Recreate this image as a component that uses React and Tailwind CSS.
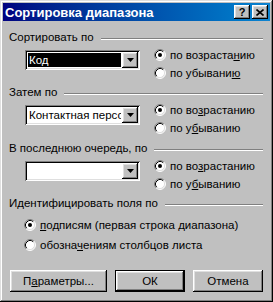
import React from "react";

const raised =
  "shadow-[inset_-1px_-1px_#000,inset_1px_1px_#fff,inset_-2px_-2px_#808080,inset_2px_2px_#dfdfdf]";

function Radio({ checked }) {
  return (
    <svg width="12" height="12" viewBox="0 0 12 12" className="shrink-0">
      <circle cx="6" cy="6" r="5" fill="#fff" />
      <path d="M2.11 9.89A5.5 5.5 0 0 1 9.89 2.11" stroke="#808080" fill="none" />
      <path d="M9.89 2.11A5.5 5.5 0 0 1 2.11 9.89" stroke="#fff" fill="none" />
      <path d="M2.82 9.18A4.5 4.5 0 0 1 9.18 2.82" stroke="#000" fill="none" />
      <path d="M9.18 2.82A4.5 4.5 0 0 1 2.82 9.18" stroke="#dfdfdf" fill="none" />
      {checked && <circle cx="6" cy="6" r="2" fill="#000" />}
    </svg>
  );
}

function Option({ checked, children, h = "h-[18px]" }) {
  return (
    <div className={`flex items-center ${h}`}>
      <Radio checked={checked} />
      <span className="ml-[4px] whitespace-nowrap">{children}</span>
    </div>
  );
}

function Header({ children, className = "" }) {
  return (
    <div className={`flex items-center h-[13px] ${className}`}>
      <span className="whitespace-nowrap">{children}</span>
      <div className="flex-1 ml-[7px] mt-[3px] border-t border-t-[#808080] border-b border-b-white" />
    </div>
  );
}

function Combo({ text, selected }) {
  return (
    <div className="w-[115px] h-[20px] bg-white flex p-[2px] shadow-[inset_1px_1px_#808080,inset_-1px_-1px_#fff,inset_2px_2px_#000,inset_-2px_-2px_#dfdfdf]">
      <div className="flex-1 min-w-0 p-[1px]">
        <div
          className={`h-full flex items-center pl-[1px] overflow-hidden whitespace-nowrap ${
            selected ? "bg-black text-white" : ""
          }`}
        >
          {text}
        </div>
      </div>
      <div className={`w-[16px] h-full bg-[#c0c0c0] flex items-center justify-center ${raised}`}>
        <svg width="7" height="4" viewBox="0 0 7 4">
          <path d="M0 0h7L3.5 4z" fill="#000" />
        </svg>
      </div>
    </div>
  );
}

function SortSection({ title, value, selected, up, down, className = "" }) {
  return (
    <div className={className}>
      <Header>{title}</Header>
      <div className="flex mt-[2px]">
        <div className="ml-[16px] mt-[4px]">
          <Combo text={value} selected={selected} />
        </div>
        <div className="ml-[14px] flex flex-col">
          <Option checked>{up}</Option>
          <Option>{down}</Option>
        </div>
      </div>
    </div>
  );
}

export default function App() {
  return (
    <div
      className="w-[273px] h-[302px] bg-[#c0c0c0] p-[3px] flex flex-col text-[11.5px] leading-[13px] text-black shadow-[inset_-1px_-1px_#000,inset_1px_1px_#dfdfdf,inset_-2px_-2px_#808080,inset_2px_2px_#fff]"
      style={{ fontFamily: '"Liberation Sans", Arial, sans-serif' }}
    >
      {/* title bar */}
      <div className="h-[18px] flex items-center pl-[2px] pr-[2px] bg-gradient-to-r from-[#000080] to-[#1084d0]">
        <span className="text-white font-bold text-[13px]">Сортировка диапазона</span>
        <div className="ml-auto flex gap-[2px]">
          <div className={`w-[16px] h-[14px] bg-[#c0c0c0] flex items-center justify-center font-bold text-[11px] ${raised}`}>
            ?
          </div>
          <div className={`w-[16px] h-[14px] bg-[#c0c0c0] flex items-center justify-center ${raised}`}>
            <svg width="8" height="7" viewBox="0 0 8 7">
              <path d="M0.5 0.5L7.5 6.5M7.5 0.5L0.5 6.5" stroke="#000" strokeWidth="1.6" />
            </svg>
          </div>
        </div>
      </div>

      <div className="flex flex-col pl-[6px] pr-[7px]">
        <SortSection
          className="mt-[10px]"
          title="Сортировать по"
          value="Код"
          selected
          up={<>по возраста<u>н</u>ию</>}
          down={<>по убывани<u>ю</u></>}
        />
        <SortSection
          className="mt-[4px]"
          title="Затем по"
          value="Контактная персона"
          up={<>по во<u>з</u>растанию</>}
          down={<>по у<u>б</u>ыванию</>}
        />
        <SortSection
          className="mt-[5px]"
          title="В последнюю очередь, по"
          value=""
          up={<>по во<u>з</u>растанию</>}
          down={<>по у<u>б</u>ыванию</>}
        />

        <Header className="mt-[4px]">Идентифицировать поля по</Header>
        <div className="ml-[15px] mt-[5px] flex flex-col">
          <Option checked h="h-[20px]">
            <u>п</u>одписям (первая строка диапазона)
          </Option>
          <Option h="h-[20px]">
            обозна<u>ч</u>ениям столбцов листа
          </Option>
        </div>

        <div className="flex mt-[15px] ml-[1px] gap-[8px]">
          <div className={`w-[97px] h-[22px] flex items-center justify-center ${raised}`}>
            П<u>а</u>раметры...
          </div>
          <div className="w-[70px] h-[22px] border border-black">
            <div className={`w-full h-full flex items-center justify-center ${raised}`}>ОК</div>
          </div>
          <div className={`w-[70px] h-[22px] flex items-center justify-center ${raised}`}>Отмена</div>
        </div>
      </div>
    </div>
  );
}
